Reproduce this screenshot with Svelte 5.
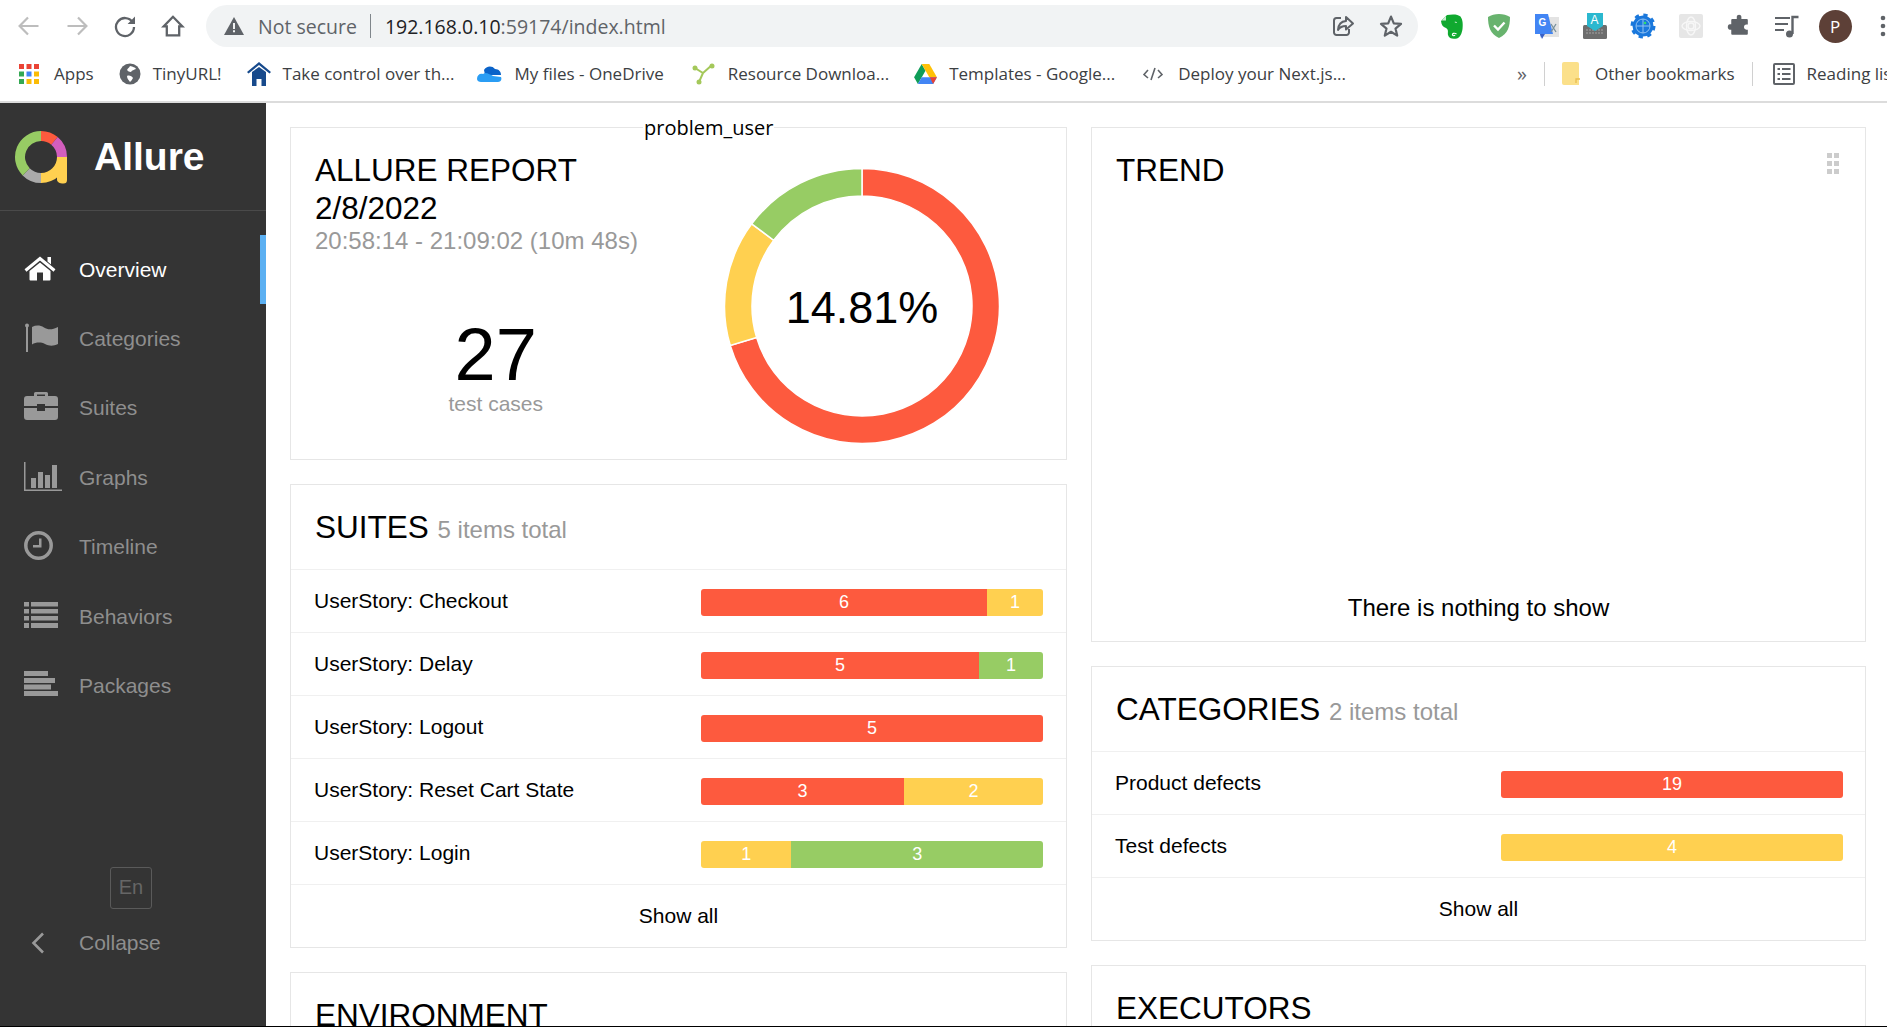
<script>
	const COLORS = { failed: '#fd5a3e', broken: '#ffd050', passed: '#97cc64' };

	function arc(cx, cy, r0, r1, a0, a1) {
		const pt = (r, a) => {
			const t = ((a - 90) * Math.PI) / 180;
			return `${(cx + r * Math.cos(t)).toFixed(2)} ${(cy + r * Math.sin(t)).toFixed(2)}`;
		};
		const large = a1 - a0 > 180 ? 1 : 0;
		return `M${pt(r1, a0)}A${r1} ${r1} 0 ${large} 1 ${pt(r1, a1)}L${pt(r0, a1)}A${r0} ${r0} 0 ${large} 0 ${pt(r0, a0)}Z`;
	}

	const donut = [
		{ color: COLORS.failed, from: 0, to: 253.33 },
		{ color: COLORS.broken, from: 253.33, to: 306.67 },
		{ color: COLORS.passed, from: 306.67, to: 360 }
	];

	const logo = [
		{ color: '#fd5a3e', from: 0, to: 40 },
		{ color: '#d35ebe', from: 40, to: 90 },
		{ color: '#ffd050', from: 90, to: 180 },
		{ color: '#aaaaaa', from: 180, to: 225 },
		{ color: '#97cc64', from: 225, to: 360 }
	];

	const nav = [
		{ id: 'home', label: 'Overview', active: true },
		{ id: 'flag', label: 'Categories' },
		{ id: 'case', label: 'Suites' },
		{ id: 'graph', label: 'Graphs' },
		{ id: 'clock', label: 'Timeline' },
		{ id: 'list', label: 'Behaviors' },
		{ id: 'pack', label: 'Packages' }
	];

	const suites = [
		{ name: 'UserStory: Checkout', parts: [{ n: 6, w: 83.6, c: 'failed' }, { n: 1, w: 16.4, c: 'broken' }] },
		{ name: 'UserStory: Delay', parts: [{ n: 5, w: 81.3, c: 'failed' }, { n: 1, w: 18.7, c: 'passed' }] },
		{ name: 'UserStory: Logout', parts: [{ n: 5, w: 100, c: 'failed' }] },
		{ name: 'UserStory: Reset Cart State', parts: [{ n: 3, w: 59.4, c: 'failed' }, { n: 2, w: 40.6, c: 'broken' }] },
		{ name: 'UserStory: Login', parts: [{ n: 1, w: 26.4, c: 'broken' }, { n: 3, w: 73.6, c: 'passed' }] }
	];

	const categories = [
		{ name: 'Product defects', parts: [{ n: 19, w: 100, c: 'failed' }] },
		{ name: 'Test defects', parts: [{ n: 4, w: 100, c: 'broken' }] }
	];

	const grip = [0, 1, 2, 3, 4, 5];
</script>

{#snippet rows(items)}
	{#each items as item}
		<div class="row">
			<span class="row-name">{item.name}</span>
			<div class="bar">
				{#each item.parts as p}
					<span class="seg" style="width:{p.w}%;background:{COLORS[p.c]}">{p.n}</span>
				{/each}
			</div>
		</div>
	{/each}
{/snippet}

<div class="page">
	<header class="toolbar">
		<span class="tb-btn">
			<svg width="24" height="24" viewBox="0 0 24 24" fill="none" stroke="#bdbdbd" stroke-width="2.2"><path d="M21.5 12H3M11 3.5 2.6 12l8.4 8.5" /></svg>
		</span>
		<span class="tb-btn">
			<svg width="24" height="24" viewBox="0 0 24 24" fill="none" stroke="#bdbdbd" stroke-width="2.2"><path d="M2.5 12H21M13 3.5l8.4 8.5-8.4 8.5" /></svg>
		</span>
		<span class="tb-btn">
			<svg width="24" height="24" viewBox="0 0 24 24" fill="none"><path d="M19.6 8.2A9 9 0 1 0 21 13" stroke="#5f6368" stroke-width="2.3" /><path d="M22 2.6V10h-7.4z" fill="#5f6368" /></svg>
		</span>
		<span class="tb-btn">
			<svg width="24" height="24" viewBox="0 0 24 24" fill="none" stroke="#5f6368" stroke-width="2.3"><path d="M12 2.8 2.6 12.4h3.2v9h12.4v-9h3.2z" /></svg>
		</span>
		<div class="omnibox">
			<svg class="warn" width="20" height="18" viewBox="0 0 20 18"><path d="M10 0 20 18H0z" fill="#5f6368" /><path d="M9 6h2v6H9zM9 13.3h2v2H9z" fill="#f1f3f4" /></svg>
			<span class="not-secure">Not secure</span>
			<span class="omni-sep"></span>
			<span class="url">192.168.0.10<span class="url-dim">:59174/index.html</span></span>
			<svg class="share" width="24" height="24" viewBox="0 0 24 24" fill="none" stroke="#5f6368" stroke-width="2"><path d="M10 4H5.500A2.500 2.500 0 0 0 3 6.500v12A2.500 2.500 0 0 0 5.500 21h10a2.500 2.500 0 0 0 2.500-2.500V15" /><path d="M15 3l7 6.500-7 6v-3.600c-4 0-6.400 1.300-8 4 .4-5 3-8.400 8-8.800z" stroke-linejoin="round" /></svg>
			<svg class="star" width="24" height="24" viewBox="0 0 24 24" fill="none" stroke="#5f6368" stroke-width="2.2" stroke-linejoin="round"><path d="M12 2.600 14.800 9.300l7.200.6-5.500 4.700 1.700 7-6.200-3.800-6.200 3.800 1.700-7L2 9.900l7.200-.6z" /></svg>
		</div>
		<div class="exts">
			<span class="tb-btn">
				<svg width="23" height="25" viewBox="0 0 23 25"><path d="M1 7 7 1C12 0 18 0 20.500 2.500 23 6 23 11 22.500 15c-.5 4-2.500 9-5.500 9.500-4 .5-8 .5-9-3.500-.5-3 1-5-2-7C3 13 1.500 11 1 7z" fill="#10a92f" /><path d="M16.500 20c-2-1.500-4.500-.5-4 1 .5 1 2 1 2.500 0" fill="none" stroke="#fff" stroke-width="1.200" /><path d="M14.500 8c.8-.6 2-.5 2.600.5-1 .4-1.900.2-2.600-.5z" fill="#fff" /><path d="M6 2v4.500H1.800z" fill="#c9ecd0" /></svg>
			</span>
			<span class="tb-btn">
				<svg width="24" height="26" viewBox="0 0 24 26"><path d="M12 1c4 0 8 1 11 3 0 9-2 17-11 21C3 21 1 13 1 4c3-2 7-3 11-3z" fill="#68b36e" /><path d="M7 12.500l4 4 6.500-7" fill="none" stroke="#fff" stroke-width="2.400" /></svg>
			</span>
			<span class="tb-btn">
				<svg width="26" height="26" viewBox="0 0 26 26"><rect x="10" y="4" width="15" height="20" fill="#e3e3e3" /><path d="M1 1h13l5 20H8l-1 4-1-4H1z" fill="#4285f4" /><path d="M8 26l3-5H6z" fill="#3a60c4" /><text x="4.500" y="13" font-family="Liberation Sans" font-size="10" font-weight="700" fill="#fff">G</text><path d="M17 11l5 8M22 11l-5 8" stroke="#78909c" stroke-width="1.300" /></svg>
			</span>
			<span class="tb-btn">
				<svg width="24" height="26" viewBox="0 0 24 26"><rect x="0" y="12" width="24" height="14" rx="1.500" fill="#6d6d6d" /><path d="M3 17h18M3 20h18" stroke="#a4a4a4" stroke-width="1.200" stroke-dasharray="2 1" /><path d="M4 0h16v13l-8 5-8-5z" fill="#2bb8cf" /><text x="7.500" y="11" font-family="Liberation Sans" font-size="12" fill="#fff">A</text></svg>
			</span>
			<span class="tb-btn">
				<svg width="26" height="26" viewBox="0 0 26 26"><circle cx="13" cy="13" r="10.500" fill="#1a78dc" /><circle cx="13" cy="13" r="10.500" fill="none" stroke="#1a78dc" stroke-width="4" stroke-dasharray="4 4.250" /><circle cx="13" cy="13" r="7" fill="none" stroke="#8fc1f2" stroke-width="1" /><path d="M6 13h14M13 6v14" stroke="#8fc1f2" stroke-width="1" /><circle cx="15" cy="10" r="1.300" fill="#2fdc6c" /></svg>
			</span>
			<span class="tb-btn">
				<svg width="24" height="24" viewBox="0 0 24 24" fill="none"><rect width="24" height="24" rx="2" fill="#e6e6e6" /><g stroke="#f7f7f7" stroke-width="1.400"><circle cx="12" cy="12" r="3" /><ellipse cx="12" cy="12" rx="9" ry="4.500" /><ellipse cx="12" cy="12" rx="4.500" ry="9" /></g></svg>
			</span>
			<span class="tb-btn">
				<svg width="24" height="24" viewBox="0 0 24 24"><path d="M9 2.500c0-3 5-3 5 0V5h6a1 1 0 0 1 1 1v5h-1.500c-3.500 0-3.500 5.500 0 5.500H21V21a1 1 0 0 1-1 1H4a1 1 0 0 1-1-1v-4.500H1.500c-3-.2-3-6 0-6H3V6a1 1 0 0 1 1-1h5z" transform="translate(1.500 .500) scale(.92)" fill="#5f6368" /></svg>
			</span>
			<span class="tb-btn">
				<svg width="24" height="24" viewBox="0 0 24 24" fill="none"><path d="M0 4h15M0 10h13M0 16h9" stroke="#5f6368" stroke-width="2.200" /><path d="M17.500 20V3h6" stroke="#5f6368" stroke-width="2.400" /><circle cx="14.500" cy="20" r="3.500" fill="#5f6368" /></svg>
			</span>
			<span class="tb-btn"><span class="avatar">P</span></span>
			<span class="tb-btn">
				<svg width="6" height="22" viewBox="0 0 6 22"><circle cx="3" cy="3" r="2.300" fill="#5f6368" /><circle cx="3" cy="11" r="2.300" fill="#5f6368" /><circle cx="3" cy="19" r="2.300" fill="#5f6368" /></svg>
			</span>
		</div>
	</header>

	<nav class="bookmarks">
		<div class="bm wide">
			<svg class="bm-icon" width="20" height="20" viewBox="0 0 20 20">
				<path d="M0 0h5v5H0z" fill="#ea4335" /><path d="M7.500 0h5v5h-5z" fill="#ea4335" /><path d="M15 0h5v5h-5z" fill="#ea4335" />
				<path d="M0 7.500h5v5H0z" fill="#34a853" /><path d="M7.500 7.500h5v5h-5z" fill="#4285f4" /><path d="M15 7.500h5v5h-5z" fill="#fbbc05" />
				<path d="M0 15h5v5H0z" fill="#34a853" /><path d="M7.500 15h5v5h-5z" fill="#fbbc05" /><path d="M15 15h5v5h-5z" fill="#fbbc05" />
			</svg>
			<span>Apps</span>
		</div>
		<div class="bm">
			<svg class="bm-icon" width="22" height="22" viewBox="0 0 22 22"><circle cx="11" cy="11" r="10.500" fill="#5f6368" /><path d="M11 3c3 1 5 1 6 3-2 1-4 1-5 3-2 0-3-1-4-2 1-2 2-2 3-4zM8 13c2-1 5 0 6 2-1 2-2 3-3 4-1-2-3-3-3-6z" fill="#fff" /></svg>
			<span>TinyURL!</span>
		</div>
		<div class="bm">
			<svg class="bm-icon" width="24" height="24" viewBox="0 0 24 24"><path d="M12 0 24 10l-1.500 1.500L12 3 1.500 11.500 0 10z" fill="#174a8c" /><path d="M5 10 12 5l7 5v14h-4.500v-7h-5v7H5z" fill="#174a8c" /></svg>
			<span>Take control over th...</span>
		</div>
		<div class="bm">
			<svg class="bm-icon" width="25" height="18" viewBox="0 0 25 18"><path d="M7 5c2-4 8-5 11-1 4 0 6 3 6 6H8z" fill="#0a63c9" /><path d="M0 14c0-4 3-6 6-5l2-1c3 0 6 2 8 3l8 1c1 2 0 5-3 5H4c-2 0-4-1-4-3z" fill="#2a9df4" /></svg>
			<span>My files - OneDrive</span>
		</div>
		<div class="bm">
			<svg class="bm-icon" width="24" height="22" viewBox="0 0 24 22" fill="none"><path d="M3 5l8 5 9-8M11 10l-4 9" stroke="#a4c85a" stroke-width="2" /><circle cx="3" cy="5" r="2.500" fill="#a4c85a" /><circle cx="20" cy="3" r="2.500" fill="#a4c85a" /><circle cx="7" cy="19" r="2.500" fill="#a4c85a" /></svg>
			<span>Resource Downloa...</span>
		</div>
		<div class="bm">
			<svg class="bm-icon" width="23" height="20" viewBox="0 0 24 21"><path d="M8 0l4 7-8 14-4-7z" fill="#0f9d58" /><path d="M8 0h8l8 14h-8z" fill="#ffc107" /><path d="M4 21l4-7h16l-4 7z" fill="#4285f4" /><path d="M20 21l4-7h-7.500z" fill="#ea4335" /></svg>
			<span>Templates - Google...</span>
		</div>
		<div class="bm wide">
			<svg class="bm-icon" width="20" height="14" viewBox="0 0 20 14" fill="none" stroke="#5f6368" stroke-width="1.600"><path d="M5 3 1 7.500 5 11M15 3l4 4.500L15 11M12 1 8 13" /></svg>
			<span>Deploy your Next.js...</span>
		</div>
		<div class="bm-end">
			<span class="more">»</span>
			<span class="bm-sep"></span>
			<div class="bm wide">
				<svg class="bm-icon" width="18" height="23" viewBox="0 0 18 23"><path d="M2 0h13a2 2 0 0 1 2 2v21H2a2 2 0 0 1-2-2V2a2 2 0 0 1 2-2z" fill="#fbe08a" /><path d="M14 21v-4h4" fill="none" stroke="#e9bd4f" stroke-width="1.300" /></svg>
				<span>Other bookmarks</span>
			</div>
			<span class="bm-sep"></span>
			<div class="bm">
				<svg class="bm-icon" width="22" height="22" viewBox="0 0 22 22" fill="none"><rect x="1" y="1" width="20" height="20" rx="1" stroke="#5f6368" stroke-width="2" /><path d="M4.500 6h2.500M9 6h8.500M4.500 11h2.500M9 11h8.500M4.500 16h2.500M9 16h8.500" stroke="#5f6368" stroke-width="2" /></svg>
				<span>Reading list</span>
			</div>
		</div>
	</nav>

	<div class="app">
		<aside class="sidebar">
			<div class="brand">
				<svg width="54" height="54" viewBox="0 0 54 54">
					{#each logo as s}
						<path d={arc(27, 27, 16, 26, s.from, s.to)} fill={s.color} />
					{/each}
					<path d="M43 27h10v23a3.500 3.500 0 0 1-3.500 3.500c-4 0-6.500-1.500-6.500-4z" fill="#ffd050" />
				</svg>
				<span class="brand-name">Allure</span>
			</div>
			<ul class="nav">
				{#each nav as item}
					<li class="nav-item" class:active={item.active}>
						<svg class="nav-icon" width="40" height="32" viewBox="0 0 40 32">
							{#if item.id === 'home'}
								<path d="M16 8.500 5.500 17v8.500a1 1 0 0 0 1 1H13v-8h6v8h6.500a1 1 0 0 0 1-1V17z" />
								<path d="M1.500 16.500 16 4.500l14.500 12" fill="none" stroke="currentColor" stroke-width="3" />
								<path d="M23.500 3h3.500v7.500l-3.500-3z" />
							{:else if item.id === 'flag'}
								<path d="M2 4h2v25H2z" /><circle cx="3" cy="2.500" r="2" />
								<path d="M8 4c4-2 8-2 12 .5s8 2.500 14-.5v17c-5 2.500-9 2-13 0s-9-2-13 .5z" />
							{:else if item.id === 'case'}
								<path d="M10 4V1.500A1.500 1.500 0 0 1 11.500 0h11A1.500 1.500 0 0 1 24 1.500V4h7a3 3 0 0 1 3 3v7H21v-2h-8v2H0V7a3 3 0 0 1 3-3zm3 0h8V2.500h-8z" />
								<path d="M0 16h13v3h8v-3h13v9a3 3 0 0 1-3 3H3a3 3 0 0 1-3-3z" />
							{:else if item.id === 'graph'}
								<path d="M0 0h1.500v27.500H38V29H0z" />
								<path d="M7 16h5v10H7zM14 10h5v16h-5zM21 13h5v13h-5zM28 3h5v23h-5z" />
							{:else if item.id === 'clock'}
								<circle cx="14.500" cy="14.500" r="12.700" fill="none" stroke="currentColor" stroke-width="3.500" />
								<path d="M15 7.500h2.500V16.500H9V14h6z" />
							{:else if item.id === 'list'}
								<path d="M0 1h5v4.500H0zM7 1h27v4.500H7zM0 8h5v4.500H0zM7 8h27v4.500H7zM0 15h5v4.500H0zM7 15h27v4.500H7zM0 22h5v5H0zM7 22h27v5H7z" />
							{:else}
								<path d="M0 1h24v5H0zM0 8h31v5H0zM0 14.500h27v5H0zM0 21h34v5H0z" />
							{/if}
						</svg>
						<span>{item.label}</span>
					</li>
				{/each}
			</ul>
			<div class="side-foot">
				<span class="lang">En</span>
				<div class="nav-item">
					<svg class="nav-icon" width="40" height="32" viewBox="0 0 40 32"><path d="M19 6.500 9.500 16l9.500 9.500" fill="none" stroke="currentColor" stroke-width="2.600" /></svg>
					<span>Collapse</span>
				</div>
			</div>
		</aside>

		<main class="content">
			<div class="col">
				<section class="card summary">
					<span class="tag">problem_user</span>
					<div class="sum-left">
						<h2 class="title">ALLURE REPORT 2/8/2022</h2>
						<div class="time">20:58:14 - 21:09:02 (10m 48s)</div>
						<div class="count">27</div>
						<div class="count-label">test cases</div>
					</div>
					<div class="sum-right">
						<svg width="280" height="280" viewBox="0 0 280 280">
							{#each donut as s}
								<path d={arc(140, 140, 110, 137.5, s.from, s.to)} fill={s.color} stroke="#fff" stroke-width="1.500" />
							{/each}
							<text x="140" y="157" class="pct">14.81%</text>
						</svg>
					</div>
				</section>

				<section class="card">
					<div class="head">
						<h2 class="title">SUITES <span class="sub">5 items total</span></h2>
					</div>
					{@render rows(suites)}
					<div class="show-all">Show all</div>
				</section>

				<section class="card">
					<div class="head">
						<h2 class="title">ENVIRONMENT</h2>
					</div>
				</section>
			</div>

			<div class="col">
				<section class="card trend">
					<h2 class="title">TREND</h2>
					<div class="grip">
						{#each grip as g}
							<span></span>
						{/each}
					</div>
					<div class="empty">There is nothing to show</div>
				</section>

				<section class="card">
					<div class="head">
						<h2 class="title">CATEGORIES <span class="sub">2 items total</span></h2>
					</div>
					{@render rows(categories)}
					<div class="show-all">Show all</div>
				</section>

				<section class="card">
					<div class="head">
						<h2 class="title">EXECUTORS</h2>
					</div>
				</section>
			</div>
		</main>
	</div>
</div>

<style>
	:global(body) {
		margin: 0;
		background: #fff;
	}

	.page {
		display: flex;
		flex-direction: column;
		height: 1026px;
		border-bottom: 1px solid #000;
		overflow: hidden;
		font-family: 'Liberation Sans', Arial, sans-serif;
		color: #000;
	}

	/* browser chrome */
	.toolbar {
		display: flex;
		align-items: center;
		flex: 0 0 52px;
		padding-left: 5px;
		background: #fff;
	}

	.tb-btn {
		display: flex;
		align-items: center;
		justify-content: center;
		flex: 0 0 48px;
		height: 48px;
	}

	.omnibox {
		display: flex;
		align-items: center;
		flex: 0 0 1212px;
		box-sizing: border-box;
		height: 42px;
		margin-left: 9px;
		padding-left: 18px;
		border-radius: 21px;
		background: #f1f3f4;
		font-family: 'Open Sans', sans-serif;
		font-size: 19.5px;
		color: #5f6368;
	}

	.not-secure {
		margin-left: 14px;
	}

	.omni-sep {
		width: 1px;
		height: 24px;
		margin: 0 14px 0 13px;
		background: #80868b;
	}

	.url {
		color: #202124;
	}

	.url-dim {
		color: #5f6368;
	}

	.share {
		margin-left: auto;
	}

	.star {
		margin: 0 15px 0 24px;
	}

	.exts {
		display: flex;
		flex: none;
		margin-left: 9px;
	}

	.avatar {
		display: flex;
		align-items: center;
		justify-content: center;
		width: 33px;
		height: 33px;
		border-radius: 50%;
		background: #5d4037;
		color: #fff;
		font-family: 'Open Sans', sans-serif;
		font-size: 17px;
	}

	.bookmarks {
		display: flex;
		align-items: center;
		flex: 0 0 51px;
		box-sizing: border-box;
		gap: 25px;
		padding: 0 0 6px 19px;
		border-bottom: 2px solid #dcdcdc;
		font-family: 'Open Sans', sans-serif;
		font-size: 17px;
		color: #3c4043;
		white-space: nowrap;
	}

	.bm {
		display: flex;
		align-items: center;
		gap: 12px;
	}

	.bm.wide {
		gap: 15px;
	}

	.bm:nth-child(4) {
		margin-left: -2px;
	}

	.bm:nth-child(5),
	.bm:nth-child(7) {
		margin-left: 3px;
	}

	.bm-icon {
		flex: none;
	}

	.bm-end {
		display: flex;
		align-items: center;
		gap: 17px;
		margin-left: 146px;
	}

	.more {
		font-size: 20px;
		color: #5f6368;
	}

	.bm-sep {
		width: 1px;
		height: 24px;
		background: #d0d0d0;
	}

	/* allure */
	.app {
		display: flex;
		flex: 1;
		min-height: 0;
	}

	.sidebar {
		display: flex;
		flex-direction: column;
		flex: 0 0 266px;
		background: #343434;
		color: #999;
	}

	.brand {
		display: flex;
		align-items: center;
		gap: 26px;
		box-sizing: border-box;
		height: 108px;
		padding: 0 0 0 14px;
		border-bottom: 1px solid #4a4a4a;
	}

	.brand-name {
		font-size: 39px;
		font-weight: 700;
		color: #fff;
	}

	.nav {
		margin: 24px 0 0;
		padding: 0;
		list-style: none;
	}

	.nav-item {
		display: flex;
		align-items: center;
		gap: 15px;
		box-sizing: border-box;
		height: 69.4px;
		padding-left: 24px;
		font-size: 21px;
		color: #8e8e8e;
	}

	.nav-item.active {
		border-right: 6px solid #5cb0f2;
		color: #fff;
	}

	.nav-icon {
		flex: none;
		fill: currentColor;
		color: #999;
	}

	.active .nav-icon {
		color: #fff;
	}

	.side-foot {
		margin-top: auto;
		padding-bottom: 48px;
	}

	.lang {
		display: flex;
		align-items: center;
		justify-content: center;
		box-sizing: border-box;
		width: 42px;
		height: 42px;
		margin-left: 110px;
		border: 1px solid #5a5a5a;
		border-radius: 3px;
		font-size: 20px;
		color: #666;
	}

	.content {
		display: flex;
		flex: 1;
		gap: 24px;
		min-width: 0;
		padding: 24px 21px 0 24px;
		overflow: hidden;
	}

	.col {
		display: flex;
		flex-direction: column;
		flex: 1 1 0;
		gap: 24px;
		min-width: 0;
	}

	.col:first-child {
		flex: 0 0 777px;
	}

	.card {
		position: relative;
		flex: none;
		border: 1px solid #e6e6e6;
		background: #fff;
	}

	.title {
		margin: 0;
		font-size: 31.5px;
		font-weight: 400;
		line-height: 38px;
	}

	.sub {
		font-size: 24px;
		color: #999;
	}

	.head {
		box-sizing: border-box;
		height: 84px;
		padding: 23px 24px 0;
	}

	.summary {
		display: flex;
		box-sizing: border-box;
		height: 332.5px;
		padding: 23px 24px 24px;
	}

	.tag {
		position: absolute;
		top: -13px;
		left: 352px;
		padding: 0 1px;
		background: #fff;
		font-family: 'Open Sans', sans-serif;
		font-size: 20px;
		line-height: 26px;
		white-space: nowrap;
	}

	.sum-left {
		flex: 1 1 0;
		min-width: 0;
		text-align: center;
	}

	.sum-left .title {
		max-width: 320px;
		text-align: left;
	}

	.time {
		font-size: 24px;
		line-height: 28px;
		color: #999;
		text-align: left;
		white-space: nowrap;
	}

	.count {
		margin-top: 63px;
		padding-left: 2px;
		font-size: 74px;
		line-height: 74px;
	}

	.count-label {
		padding-left: 2px;
		font-size: 21px;
		line-height: 24px;
		color: #999;
	}

	.sum-right {
		display: flex;
		justify-content: center;
		flex: 1 1 0;
		min-width: 0;
		padding: 15px 0 0 8px;
	}

	.pct {
		font-size: 45px;
		text-anchor: middle;
	}

	.row {
		display: flex;
		align-items: center;
		justify-content: space-between;
		box-sizing: border-box;
		height: 63.1px;
		padding: 0 23px;
		border-top: 1px solid #f0f0f0;
		font-size: 21px;
	}

	.col:last-child .row {
		padding-right: 22px;
	}

	.bar {
		display: flex;
		flex: 0 0 342px;
		height: 27px;
		margin-top: 3px;
		border-radius: 3px;
		overflow: hidden;
	}

	.seg {
		display: flex;
		align-items: center;
		justify-content: center;
		font-size: 18px;
		color: #fff;
	}

	.show-all {
		display: flex;
		align-items: center;
		justify-content: center;
		height: 62px;
		border-top: 1px solid #f0f0f0;
		font-size: 21px;
	}

	.trend {
		display: flex;
		flex-direction: column;
		box-sizing: border-box;
		height: 514.5px;
		padding: 23px 24px 19px;
	}

	.grip {
		position: absolute;
		top: 25px;
		right: 26px;
		display: grid;
		grid-template-columns: 5px 5px;
		grid-auto-rows: 5px;
		gap: 3px 2px;
	}

	.grip span {
		background: #ccc;
	}

	.empty {
		margin-top: auto;
		font-size: 24px;
		line-height: 28px;
		text-align: center;
	}
</style>
